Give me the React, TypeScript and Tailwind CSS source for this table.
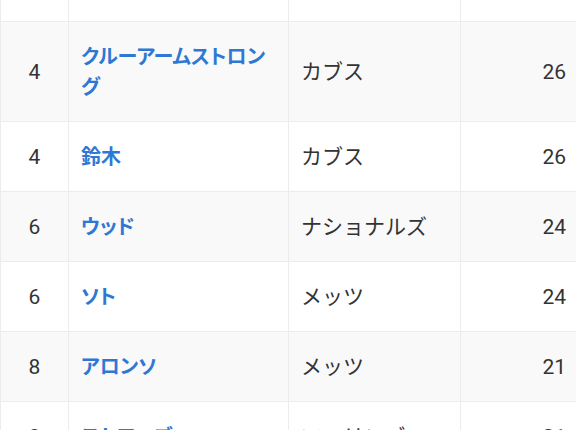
import React from "react";

type Row = { rank: string; name: string; team: string; hr: string };

const rows: Row[] = [
  { rank: "3", name: "シュワーバー", team: "フィリーズ", hr: "27" },
  { rank: "4", name: "クルーアームストロング", team: "カブス", hr: "26" },
  { rank: "4", name: "鈴木", team: "カブス", hr: "26" },
  { rank: "6", name: "ウッド", team: "ナショナルズ", hr: "24" },
  { rank: "6", name: "ソト", team: "メッツ", hr: "24" },
  { rank: "8", name: "アロンソ", team: "メッツ", hr: "21" },
  { rank: "8", name: "ストワーズ", team: "マーリンズ", hr: "21" },
];

export default function App() {
  return (
    <div
      className="w-[576px] h-[430px] overflow-hidden bg-white text-[#333]"
      style={{ fontFamily: "Roboto, 'Noto Sans CJK JP', sans-serif" }}
    >
      <table className="table-fixed border-collapse w-[590px] mt-[-49px] text-[21px] leading-[30px]">
        <colgroup>
          <col className="w-[68px]" />
          <col className="w-[220px]" />
          <col className="w-[172px]" />
          <col className="w-[130px]" />
        </colgroup>
        <tbody>
          {rows.map((r, i) => (
            <tr key={i} className={i % 2 === 1 ? "bg-[#f9f9f9]" : "bg-white"}>
              <td className="border border-[#ececec] pt-5 pb-[19px] text-center align-middle">{r.rank}</td>
              <td className="border border-[#ececec] pt-5 pb-[19px] pl-[12px] pr-2 align-middle font-bold text-[20px] text-[#2e78d4] [font-feature-settings:'palt']">
                {r.name}
              </td>
              <td className="border border-[#ececec] pt-5 pb-[19px] pl-[12px] pr-3 align-middle">{r.team}</td>
              <td className="border border-[#ececec] pt-5 pb-[19px] pr-[24px] text-right align-middle">{r.hr}</td>
            </tr>
          ))}
        </tbody>
      </table>
    </div>
  );
}
